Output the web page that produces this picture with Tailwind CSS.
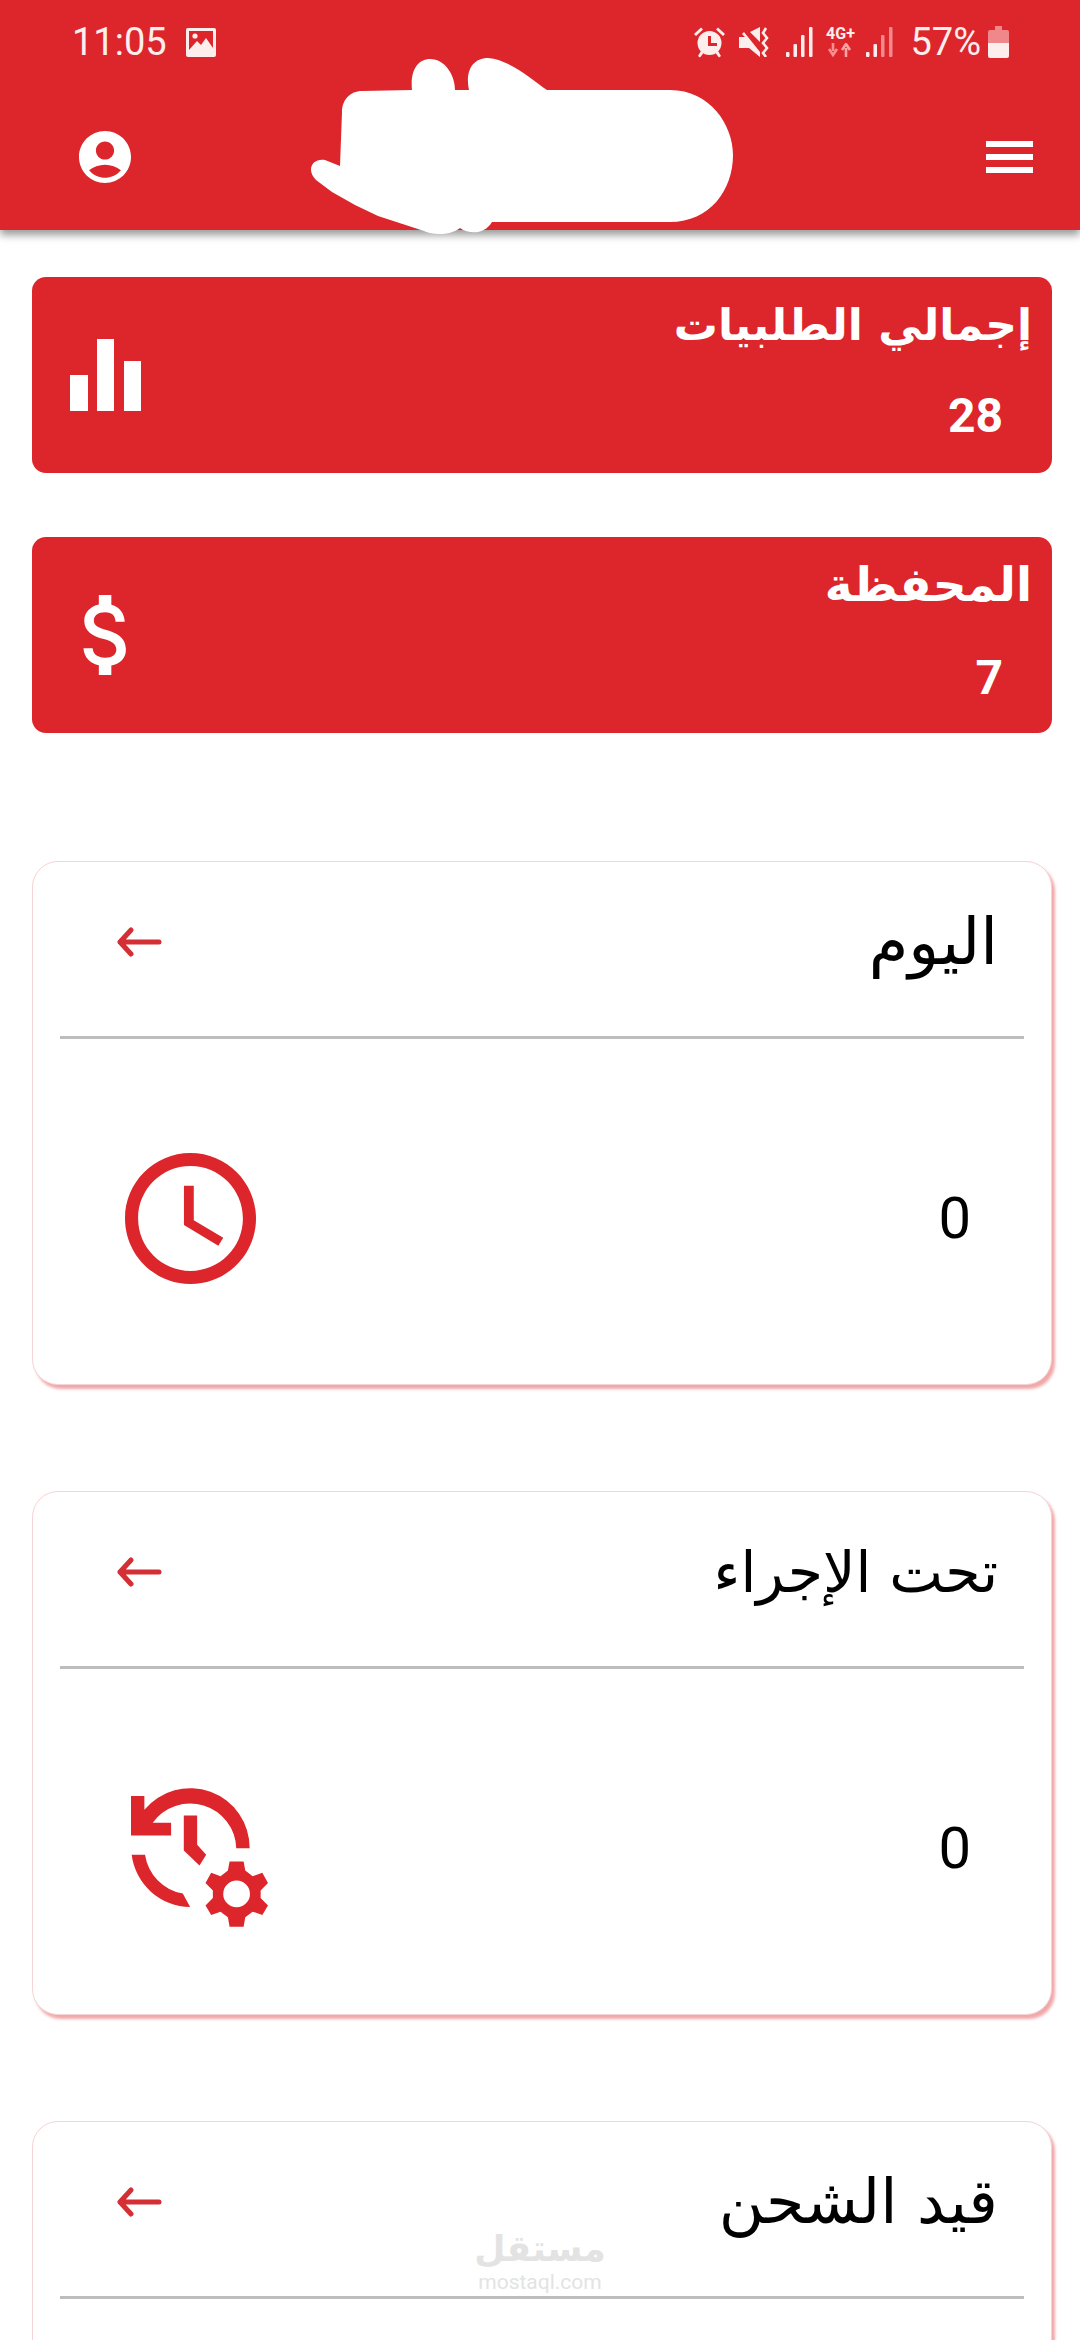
<!DOCTYPE html>
<html lang="ar">
<head>
    <meta charset="UTF-8">
    <meta name="viewport" content="width=device-width, initial-scale=1.0">
    <title>لوحة التحكم</title>
    <script src="https://cdn.jsdelivr.net/npm/@tailwindcss/browser@4"></script>
</head>
<body class="bg-white">
<div class="w-[1080px] h-[2340px] overflow-hidden relative font-['DejaVu_Sans',sans-serif]">

    <!-- header -->
    <header class="relative z-10 h-[230px] bg-[#dc262b] shadow-[0_5px_8px_rgba(0,0,0,0.4)]">
        <!-- status bar -->
        <div class="h-[84px] pl-[72px] pr-[71px] flex items-center justify-between text-[#fdeeee] font-['Roboto',sans-serif]">
            <div class="flex items-center">
                <span class="text-[38px] leading-none">11:05</span>
                <svg class="ml-[19px]" width="30" height="29" viewBox="0 0 30 29">
                    <rect width="30" height="29" rx="2" fill="#fdeeee"/>
                    <rect x="3" y="3" width="24" height="19" fill="#dc262b"/>
                    <circle cx="9" cy="8" r="2.6" fill="#fdeeee"/>
                    <path d="M3 22 L11 13 L15 17 L20 10 L27 20 V22 Z" fill="#fdeeee"/>
                </svg>
            </div>
            <div class="flex items-center">
                <!-- alarm -->
                <svg width="33" height="32" viewBox="0 0 33 32">
                    <circle cx="16.5" cy="17" r="12" fill="#fdeeee"/>
                    <path d="M15 10 h3 v7 h6 v3 h-9 Z" fill="#dc262b"/>
                    <path d="M1 8 L8 1.5 L10 3.5 L3 10 Z M32 8 L25 1.5 L23 3.5 L30 10 Z M5 30 L8 25 L10.5 27 L7 31.5 Z M28 30 L25 25 L22.5 27 L26 31.5 Z" fill="#fdeeee"/>
                </svg>
                <!-- vibrate muted -->
                <svg class="ml-[13px]" width="31" height="30" viewBox="0 0 31 30">
                    <path d="M0 10 H6 L3 7 L5 5 L21 25 V30 L10 21 H0 Z M11 5 L21 0 V15 Z" fill="#fdeeee"/>
                    <path d="M27 1 L24 6 L28 11 L24 16 L28 21 L24 26 L27 30" fill="none" stroke="#fdeeee" stroke-width="2.6"/>
                </svg>
                <!-- signal 1 -->
                <svg class="ml-[16px]" width="27" height="30" viewBox="0 0 27 30">
                    <rect x="0" y="25" width="3.5" height="5" rx="1" fill="#fdeeee"/>
                    <rect x="7.5" y="17" width="3.5" height="13" rx="1" fill="#fdeeee"/>
                    <rect x="15" y="8" width="3.5" height="22" rx="1" fill="#fdeeee"/>
                    <rect x="23" y="0" width="3.5" height="30" rx="1" fill="#fdeeee"/>
                </svg>
                <!-- 4G+ -->
                <div class="ml-[12px] w-[30px] h-[32px] flex flex-col items-center">
                    <span class="text-[16px] leading-[15px] font-bold">4G+</span>
                    <svg class="mt-[2px]" width="24" height="14" viewBox="0 0 24 14">
                        <path d="M5 0 V8 M1 6 L5 12 L9 6" fill="none" stroke="#ff8f8f" stroke-width="2.6"/>
                        <path d="M18 14 V5 M14 7 L18 1 L22 7" fill="none" stroke="#ffa3a3" stroke-width="2.6"/>
                    </svg>
                </div>
                <!-- signal 2 -->
                <svg class="ml-[11px]" width="27" height="30" viewBox="0 0 27 30">
                    <rect x="0" y="25" width="3.5" height="5" rx="1" fill="#fdeeee"/>
                    <rect x="7.5" y="17" width="3.5" height="13" rx="1" fill="#fdeeee"/>
                    <rect x="15" y="8" width="3.5" height="22" rx="1" fill="#f28a8d"/>
                    <rect x="23" y="0" width="3.5" height="30" rx="1" fill="#f28a8d"/>
                </svg>
                <span class="ml-[17px] text-[38px] leading-none">57%</span>
                <!-- battery -->
                <svg class="ml-[7px]" width="21" height="32" viewBox="0 0 21 32">
                    <path d="M7 0 H14 V4 H19 Q21 4 21 6 V17 H0 V6 Q0 4 2 4 H7 Z" fill="#f0878a"/>
                    <path d="M0 17 H21 V30 Q21 32 19 32 H2 Q0 32 0 30 Z" fill="#fdeeee"/>
                </svg>
            </div>
        </div>
        <!-- app bar -->
        <div class="h-[146px] pl-[79px] pr-[47px] flex items-center justify-between">
            <svg class="text-white" width="52" height="52" viewBox="2 2 20 20" fill="currentColor">
                <path d="M12 2C6.48 2 2 6.48 2 12s4.48 10 10 10 10-4.48 10-10S17.52 2 12 2zm0 4c1.93 0 3.5 1.57 3.5 3.5S13.93 13 12 13s-3.5-1.57-3.5-3.5S10.07 6 12 6zm0 14c-2.03 0-4.43-.82-6.14-2.88C7.55 15.8 9.68 15 12 15s4.45.8 6.14 2.12C16.43 19.18 14.03 20 12 20z"/>
            </svg>
            <div class="w-[47px] flex flex-col gap-[7px]">
                <div class="h-[6px] bg-white"></div>
                <div class="h-[6px] bg-white"></div>
                <div class="h-[6px] bg-white"></div>
            </div>
        </div>
        <!-- painted over blob -->
        <svg class="absolute left-0 top-0" width="1080" height="240" viewBox="0 0 1080 240">
            <path fill="#fff" d="M362 91 L412 90 C410 70 418 59 430 59 C445 59 455 75 455 90 L469 90 C465 72 472 58 488 58 C510 60 530 78 547 90 L670 90 C710 90 733 125 733 155 C733 190 710 222 670 222 L492 222 C485 234 470 235 460 228 C450 236 432 235 424 231 L378 216 L355 205 L332 192 L316 180 C306 170 312 158 325 160 L340 166 L342 112 C342 100 350 91 362 91 Z"/>
        </svg>
    </header>

    <main class="pl-[32px] pr-[28px] pt-[47px]" dir="rtl">
        <!-- stat cards -->
        <div class="h-[196px] rounded-[14px] bg-[#dc262b] text-white flex justify-between items-center">
            <div class="self-start mt-[18px] mr-[20px]">
                <div class="text-[44px] leading-[60px] font-bold">إجمالي الطلبيات</div>
                <div class="mr-[29px] mt-[37px] text-[48px] leading-[48px] font-bold font-['Roboto',sans-serif]">28</div>
            </div>
            <svg class="ml-[38px]" width="71" height="72" viewBox="0 0 71 72" fill="#fff">
                <rect x="0" y="36" width="18" height="36"/>
                <rect x="27" y="0" width="17" height="72"/>
                <rect x="54" y="22" width="17" height="50"/>
            </svg>
        </div>
        <div class="mt-[64px] h-[196px] rounded-[14px] bg-[#dc262b] text-white flex justify-between items-center">
            <div class="self-start mt-[18px] mr-[20px]">
                <div class="text-[47px] leading-[60px] font-bold">المحفظة</div>
                <div class="mr-[29px] mt-[39px] text-[48px] leading-[48px] font-bold font-['Roboto',sans-serif]">7</div>
            </div>
            <svg class="ml-[46px]" width="50" height="80" viewBox="5 3 12 18" preserveAspectRatio="none" fill="#fff">
                <path d="M11.8 10.9c-2.27-.59-3-1.2-3-2.15 0-1.09 1.01-1.85 2.7-1.85 1.78 0 2.44.85 2.5 2.1h2.21c-.07-1.72-1.12-3.3-3.21-3.81V3h-3v2.16c-1.94.42-3.5 1.68-3.5 3.61 0 2.31 1.91 3.46 4.7 4.13 2.5.6 3 1.48 3 2.41 0 .69-.49 1.79-2.7 1.79-2.06 0-2.87-.92-2.98-2.1h-2.2c.12 2.19 1.76 3.42 3.68 3.83V21h3v-2.15c1.95-.37 3.5-1.5 3.5-3.55 0-2.84-2.43-3.81-4.7-4.4z"/>
            </svg>
        </div>

        <!-- اليوم -->
        <section class="mt-[128px] h-[524px] rounded-[26px] bg-white border border-[#f6d3d4] shadow-[3px_4px_3px_rgba(220,38,43,0.4)]">
            <div class="h-[160px] pr-[53px] pl-[83px] flex items-center justify-between">
                <span class="text-[64px] leading-none text-black">اليوم</span>
                <svg width="46" height="30" viewBox="0 0 46 30" fill="none" stroke="#d32f35" stroke-width="5" stroke-linecap="round" stroke-linejoin="round">
                    <path d="M43 15 H4 M15 3 L4 15 L15 27"/>
                </svg>
            </div>
            <div class="mt-[14px] mx-[27px] h-[3px] bg-[#bdbdbd]"></div>
            <div class="h-[346px] pr-[80px] pl-[92px] pt-[12px] flex items-center justify-between">
                <span class="text-[58px] leading-none text-black font-['Roboto',sans-serif]">0</span>
                <svg width="131" height="131" viewBox="2 2 20 20" fill="#dc262b">
                    <path d="M11.99 2C6.47 2 2 6.48 2 12s4.47 10 9.99 10C17.52 22 22 17.52 22 12S17.52 2 11.99 2zM12 20c-4.42 0-8-3.58-8-8s3.58-8 8-8 8 3.58 8 8-3.58 8-8 8zm.5-13H11v6l5.25 3.15.75-1.23-4.5-2.67z"/>
                </svg>
            </div>
        </section>

        <!-- تحت الإجراء -->
        <section class="mt-[106px] h-[524px] rounded-[26px] bg-white border border-[#f6d3d4] shadow-[3px_4px_3px_rgba(220,38,43,0.4)]">
            <div class="h-[160px] pr-[53px] pl-[83px] flex items-center justify-between">
                <span class="text-[57px] leading-none text-black">تحت الإجراء</span>
                <svg width="46" height="30" viewBox="0 0 46 30" fill="none" stroke="#d32f35" stroke-width="5" stroke-linecap="round" stroke-linejoin="round">
                    <path d="M43 15 H4 M15 3 L4 15 L15 27"/>
                </svg>
            </div>
            <div class="mt-[14px] mx-[27px] h-[3px] bg-[#bdbdbd]"></div>
            <div class="h-[346px] pr-[80px] pl-[98px] pt-[12px] flex items-center justify-between">
                <span class="text-[58px] leading-none text-black font-['Roboto',sans-serif]">0</span>
                <svg class="mt-[18px]" width="137" height="139" viewBox="125 118 410 416" fill="#dc262b" fill-rule="evenodd">
                    <path d="M125 142 H165 V183 A178 178 0 0 1 480 298 H440 A138 138 0 0 0 190 222 H245 V260 H125 Z"/>
                    <path d="M127 318 H167 A138 138 0 0 0 280 434 L302 474 A178 178 0 0 1 127 318 Z"/>
                    <path d="M283 200 H323 V288 L350 318 L330 350 L283 305 Z"/>
                    <path d="M420 338 H462 L467 365 L489 382 L518 372 L535 402 L513 425 V447 L535 470 L518 498 L489 488 L467 505 L462 533 H420 L415 505 L393 488 L365 498 L348 470 L370 447 V425 L348 402 L365 372 L393 382 L415 365 Z M441 395 A40 40 0 1 0 441 475 A40 40 0 1 0 441 395 Z"/>
                </svg>
            </div>
        </section>

        <!-- قيد الشحن -->
        <section class="mt-[106px] h-[524px] rounded-[26px] bg-white border border-[#f6d3d4] shadow-[3px_4px_3px_rgba(220,38,43,0.4)]">
            <div class="h-[160px] pr-[53px] pl-[83px] flex items-center justify-between">
                <span class="text-[62px] leading-none text-black">قيد الشحن</span>
                <svg width="46" height="30" viewBox="0 0 46 30" fill="none" stroke="#d32f35" stroke-width="5" stroke-linecap="round" stroke-linejoin="round">
                    <path d="M43 15 H4 M15 3 L4 15 L15 27"/>
                </svg>
            </div>
            <div class="mt-[14px] mx-[27px] h-[3px] bg-[#bdbdbd]"></div>
        </section>
    </main>

    <!-- watermark -->
    <div class="absolute left-[475px] top-[2226px] w-[130px] flex flex-col items-center text-[#e3e3e3] pointer-events-none">
        <span class="text-[36px] leading-[46px] font-bold" dir="rtl">مستقل</span>
        <span class="text-[21px] leading-[20px] font-['Roboto',sans-serif]">mostaql.com</span>
    </div>
</div>
</body>
</html>
